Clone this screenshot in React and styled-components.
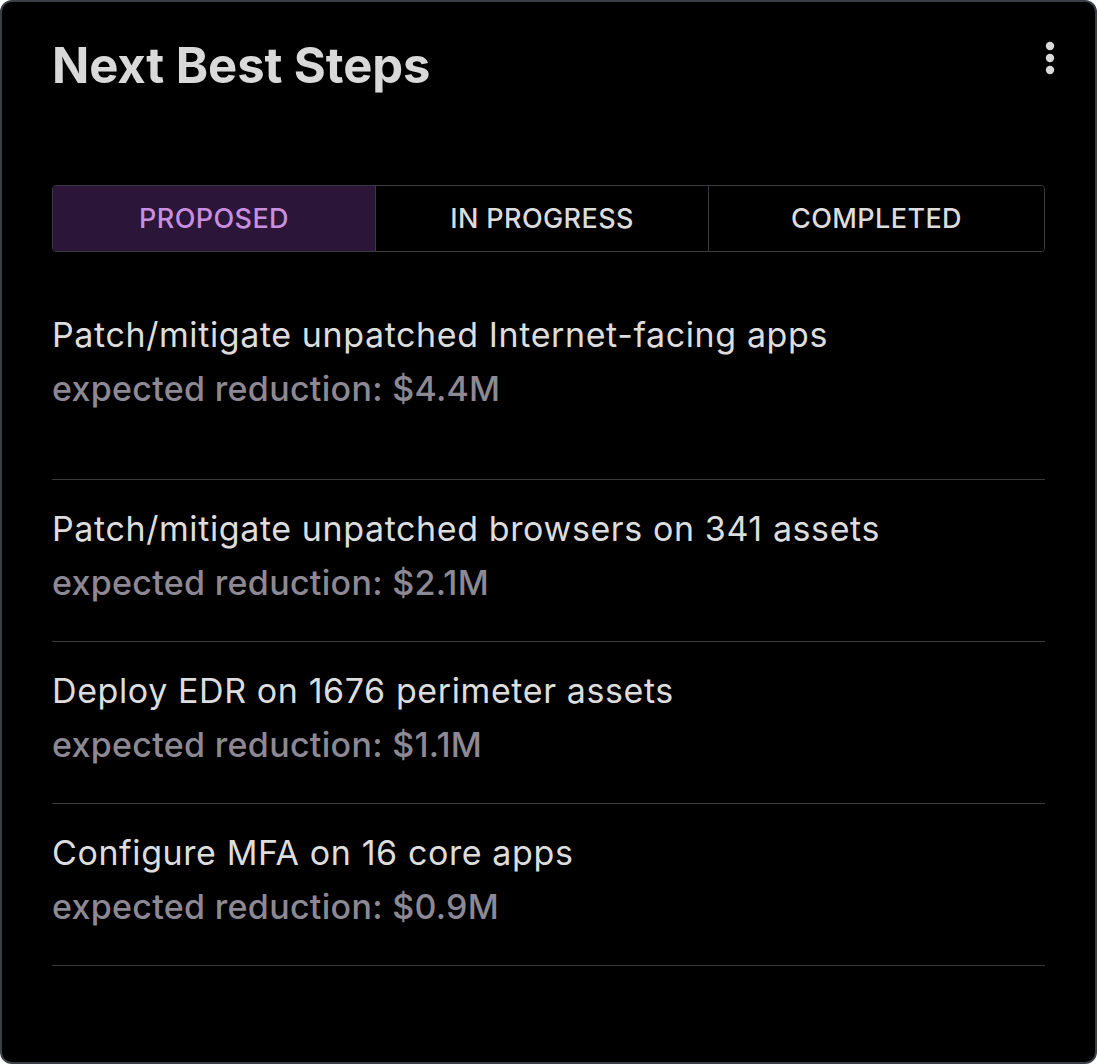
import React from "react";
import styled, { createGlobalStyle } from "styled-components";

const Global = createGlobalStyle`
  html, body { margin: 0; padding: 0; background: #ffffff; }
  body { font-family: Inter, "Noto Sans", sans-serif; }
  * { box-sizing: border-box; }
`;

const Card = styled.section`
  width: 1097px;
  height: 1064px;
  background: #000000;
  border: 2px solid #3b3e43;
  border-radius: 12px;
  padding: 30px 50px 0 50px;
  display: flex;
  flex-direction: column;
  color: #dedede;
`;

const Header = styled.header`
  display: flex;
  justify-content: space-between;
  align-items: flex-start;
`;

const Title = styled.h1`
  margin: 0;
  font-size: 49px;
  line-height: 68px;
  font-weight: 700;
  color: #d9d9d9;
  letter-spacing: -0.1px;
`;

const MenuButton = styled.button`
  background: none;
  border: none;
  padding: 0;
  margin: 6px -17px 0 0;
  width: 24px;
  height: 40px;
  display: flex;
  align-items: center;
  justify-content: center;
  cursor: pointer;
`;

const Tabs = styled.div`
  margin-top: 85px;
  display: flex;
  border: 1px solid #3a3b3e;
  border-radius: 4px;
  overflow: hidden;
  height: 67px;
`;

const Tab = styled.button`
  flex: 0 0 ${(p) => p.$w}px;
  background: ${(p) => (p.$active ? "#2b1538" : "#000000")};
  color: ${(p) => (p.$active ? "#c98fdf" : "#dcdcdc")};
  border: none;
  border-left: ${(p) => (p.$first ? "none" : "1px solid #3a3b3e")};
  font-family: inherit;
  font-size: 27px;
  font-weight: 500;
  letter-spacing: 0.4px;
  text-transform: uppercase;
  padding: 0;
  cursor: pointer;
  &:last-child { flex: 1 1 auto; }
`;

const List = styled.ul`
  list-style: none;
  margin: 0;
  padding: 0;
`;

const Item = styled.li`
  border-bottom: 1px solid #3a3a3c;
  padding: ${(p) => (p.$first ? "61px 0 68px" : "27px 0 36px")};
  display: flex;
  flex-direction: column;
  gap: 10px;
`;

const StepTitle = styled.div`
  font-size: 34px;
  line-height: 44px;
  color: #dddddd;
  font-weight: 400;
  letter-spacing: 0.6px;
`;

const Reduction = styled.div`
  font-size: 34px;
  line-height: 44px;
  color: #8d8994;
  font-weight: 500;
  letter-spacing: 0.3px;
`;

const steps = [
  { title: "Patch/mitigate unpatched Internet-facing apps", value: "$4.4M" },
  { title: "Patch/mitigate unpatched browsers on 341 assets", value: "$2.1M" },
  { title: "Deploy EDR on 1676 perimeter assets", value: "$1.1M" },
  { title: "Configure MFA on 16 core apps", value: "$0.9M" },
];

const Dots = () => (
  <svg width="12" height="36" viewBox="0 0 12 36">
    <circle cx="6" cy="6" r="4.2" fill="#d9d9d9" />
    <circle cx="6" cy="18" r="4.2" fill="#d9d9d9" />
    <circle cx="6" cy="30" r="4.2" fill="#d9d9d9" />
  </svg>
);

export default function App() {
  return (
    <>
      <Global />
      <Card>
        <Header>
          <Title>Next Best Steps</Title>
          <MenuButton aria-label="More options">
            <Dots />
          </MenuButton>
        </Header>
        <Tabs>
          <Tab $first $active $w={322}>Proposed</Tab>
          <Tab $w={333}>In Progress</Tab>
          <Tab>Completed</Tab>
        </Tabs>
        <List>
          {steps.map((s, i) => (
            <Item key={s.title} $first={i === 0}>
              <StepTitle>{s.title}</StepTitle>
              <Reduction>expected reduction: {s.value}</Reduction>
            </Item>
          ))}
        </List>
      </Card>
    </>
  );
}
